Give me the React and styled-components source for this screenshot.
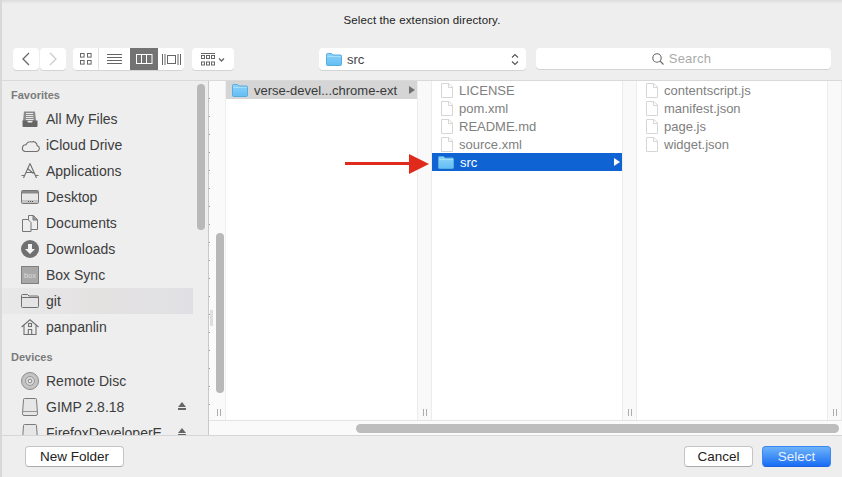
import React from "react";
import styled, { createGlobalStyle } from "styled-components";

const Global = createGlobalStyle`
  html, body { margin: 0; padding: 0; background: #ededed; }
  body { font-family: "Liberation Sans", Arial, sans-serif; -webkit-font-smoothing: antialiased; }
`;

const Dialog = styled.div`
  position: relative; width: 842px; height: 477px; overflow: hidden;
  display: flex; flex-direction: column; background: #eeeeee;
  border-left: 2px solid #d8d8d8; box-sizing: border-box;
`;
const Header = styled.header`
  height: 81px; flex: none; box-sizing: border-box; display: flex; flex-direction: column;
  border-bottom: 1px solid #d9d9d9; margin-left: -2px; padding-left: 2px;
  background: linear-gradient(#dcdcdc 0, #eeeeee 4px);
`;
const Title = styled.div`
  height: 48px; flex: none; box-sizing: border-box; padding-top: 13px; text-align: center;
  font-size: 11.5px; line-height: 14px; color: #222; letter-spacing: .12px;
`;
const Toolbar = styled.div`
  display: flex; align-items: flex-start; padding-left: 11px; height: 22px;
`;
const Tool = styled.div`
  height: 22px; box-sizing: border-box; background: #fff; border-radius: 4px;
  box-shadow: 0 1px 0 #d4d4d4; display: flex; align-items: center; justify-content: center; flex: none;
  width: ${p => p.$w}px; margin-left: ${p => p.$ml || 0}px; color: #666;
`;
const Segments = styled.div`
  display: flex; height: 22px; flex: none; margin-left: ${p => p.$ml}px; border-radius: 4px;
  overflow: hidden; box-shadow: 0 1px 0 #d4d4d4; background: #fff;
`;
const Segment = styled.div`
  width: ${p => p.$w}px; height: 22px; display: flex; align-items: center; justify-content: center;
  box-sizing: border-box; background: ${p => p.$on ? "#737373" : "#fff"}; color: ${p => p.$on ? "#fff" : "#666"};
  border-right: ${p => p.$div ? "1px solid #e2e2e2" : "0"};
`;
const PathPopup = styled(Tool)`
  justify-content: flex-start; padding: 0 7px 0 7px; gap: 5px; font-size: 13px; color: #444;
`;
const PathLabel = styled.span`flex: 1;`;
const SearchBox = styled(Tool)`
  gap: 5px; font-size: 13px; color: #aaa; height: 21px; padding-right: 4px; letter-spacing: .2px;
`;

const Body = styled.div`flex: 1; display: flex; min-height: 0;`;
const Sidebar = styled.aside`
  position: relative; width: 207px; flex: none; box-sizing: border-box; overflow: hidden;
  border-right: 1px solid #c9c9c9; padding-top: 7px;
`;
const Group = styled.div`
  height: 15px; line-height: 15px; padding-left: 9px; font-size: 11px; font-weight: 700; color: #7b7b7b;
  margin-top: ${p => p.$mt || 0}px; margin-bottom: 3px;
`;
const Place = styled.div`
  height: 26px; width: 191px; flex: none; display: flex; align-items: center; box-sizing: border-box;
  padding-left: 18px; gap: 6px; font-size: 14px; color: #3c3c3c; white-space: nowrap; position: relative;
  background: ${p => p.$on ? "linear-gradient(90deg,#e9e9e9,#e4e1e1 50%,#e0e0e4)" : "transparent"};
`;
const PlaceIcon = styled.span`width: 20px; height: 20px; display: flex; align-items: center; justify-content: center; flex: none; color: #707070;`;
const Eject = styled.span`
  position: absolute; left: 176px; top: 8px; width: 0; height: 0;
  border-left: 4px solid transparent; border-right: 4px solid transparent; border-bottom: 5px solid #666;
  &::after { content: ""; position: absolute; left: -4px; top: 6px; width: 8px; height: 2px; background: #666; }
`;
const Thumb = styled.div`
  position: absolute; background: #b8b8b8; border-radius: 4px;
`;
const SideThumb = styled(Thumb)`left: 195px; top: 3px; width: 8px; height: 146px;`;

const Browser = styled.div`flex: 1; display: flex; flex-direction: column; min-width: 0; position: relative;`;
const Columns = styled.div`height: 339px; flex: none; display: flex; border-bottom: 1px solid #e3e3e3; background: #fff;`;
const Resizer = styled.div`
  width: ${p => p.$w}px; flex: none; box-sizing: border-box; background: #f9f9f9; position: relative;
  border-left: 1px solid #ececec; border-right: 1px solid #ececec;
  &::after {
    content: ""; position: absolute; bottom: 4px; left: ${p => p.$grip}px; width: 2px; height: 7px;
    border-left: 1px solid #adadad; border-right: 1px solid #adadad;
  }
`;
const Stub = styled.div`
  width: 17px; flex: none; position: relative; background: #fafafa; box-sizing: border-box;
  border-right: 1px solid #eee;
  background-image: repeating-linear-gradient(#fafafa 0 17px, #9a9a9a 17px 18px);
  background-size: 1px 100%; background-repeat: no-repeat;
  &::before { content: ""; position: absolute; left: 1px; top: 229px; width: 3px; height: 16px; background: #dedede; }
  &::after {
    content: ""; position: absolute; bottom: 4px; left: 8px; width: 2px; height: 7px;
    border-left: 1px solid #adadad; border-right: 1px solid #adadad;
  }
`;
const StubThumb = styled(Thumb)`left: 7px; top: 152px; width: 8px; height: 160px;`;
const Column = styled.div`width: ${p => p.$w}px; flex: none; overflow: hidden;`;
const Row = styled.div`
  height: 18px; display: flex; align-items: center; gap: 6px; box-sizing: border-box; position: relative;
  padding-left: ${p => p.$pl}px; font-size: 13px; white-space: nowrap;
  color: ${p => p.$sel ? "#fff" : p.$dark ? "#3a3a3a" : "#808080"};
  background: ${p => p.$sel ? "#1063d3" : p.$gray ? "#d5d5d5" : "transparent"};
`;
const Chevron = styled.span`
  position: absolute; right: 2px; top: 5px; width: 0; height: 0;
  border-top: 4px solid transparent; border-bottom: 4px solid transparent;
  border-left: 6px solid ${p => p.$c};
`;
const HTrack = styled.div`
  flex: 1; background: #fafafa; padding: 3px 3px 0 147px;
`;
const HThumb = styled.div`height: 9px; background: #bdbdbd; border-radius: 5px;`;

const Footer = styled.footer`
  height: 42px; flex: none; box-sizing: border-box; border-top: 1px solid #d6d6d6; margin-left: -2px;
  display: flex; align-items: flex-start; padding: 10px 11px 0 25px; gap: 9px; background: #eeeeee;
`;
const Button = styled.button`
  width: ${p => p.$w}px; height: 21px; padding: 0; box-sizing: border-box; font: 13.5px "Liberation Sans", Arial, sans-serif;
  border-radius: 4px; border: 1px solid ${p => p.$primary ? "#3b86f0" : "#c4c4c4"};
  border-bottom-color: ${p => p.$primary ? "#1d62e0" : "#ababab"};
  background: ${p => p.$primary ? "linear-gradient(#6cb3fa,#1a6df5)" : "#fff"};
  color: ${p => p.$primary ? "#e6f1ff" : "#222"};
  margin-right: ${p => p.$mr || 0}px;
`;
const Arrow = styled.svg`position: absolute; left: 343px; top: 154px;`;

const Back = ({ c }) => (
  <svg width="10" height="14" viewBox="0 0 10 14"><path d={c} fill="none" stroke="currentColor" strokeWidth="1.3" /></svg>
);
const IconView = () => (
  <svg width="12" height="12" viewBox="0 0 12 12" fill="none" stroke="currentColor"><rect x=".5" y=".5" width="3.6" height="3.6" /><rect x="7.5" y=".5" width="3.6" height="3.6" /><rect x=".5" y="7.5" width="3.6" height="3.6" /><rect x="7.5" y="7.5" width="3.6" height="3.6" /></svg>
);
const ListView = () => (
  <svg width="15" height="11" viewBox="0 0 15 11" stroke="currentColor"><path d="M0 .5h15M0 3.5h15M0 6.5h15M0 9.5h15" /></svg>
);
const ColView = () => (
  <svg width="17" height="10" viewBox="0 0 17 10" fill="none" stroke="currentColor"><rect x=".5" y=".5" width="15.5" height="9" /><path d="M5.5 0v10M10.5 0v10" /></svg>
);
const FlowView = () => (
  <svg width="19" height="11" viewBox="0 0 19 11" fill="none" stroke="currentColor"><rect x="5.5" y="1.5" width="8" height="8" /><path d="M.5 0v11M3 0v11M16 0v11M18.500 0v11" /></svg>
);
const ArrangeIcon = () => (
  <svg width="24" height="13" viewBox="0 0 24 13" fill="none" stroke="currentColor">
    <path d="M0 .5h14" />
    <rect x=".5" y="2.500" width="3" height="3" /><rect x="5.500" y="2.500" width="3" height="3" /><rect x="10.500" y="2.500" width="3" height="3" />
    <rect x=".5" y="9" width="3" height="3" /><rect x="5.500" y="9" width="3" height="3" /><rect x="10.500" y="9" width="3" height="3" />
    <path d="M18 5.500l2.500 2.500 2.500-2.500" strokeWidth="1.300" />
  </svg>
);
const Updown = () => (
  <svg width="8" height="13" viewBox="0 0 8 13" fill="none" stroke="#555" strokeWidth="1.100"><path d="M1 4.500L4 1.500 7 4.500M1 8.500L4 11.500 7 8.500" /></svg>
);
const SearchGlass = () => (
  <svg width="12" height="12" viewBox="0 0 12 12" fill="none" stroke="#666" strokeWidth="1.100"><circle cx="5" cy="5" r="4.200" /><path d="M8 8l3.500 3.500" /></svg>
);
const Folder = ({ w = 16, h = 13 }) => (
  <svg width={w} height={h} viewBox="0 0 16 13" style={{ flex: "none" }}>
    <defs><linearGradient id="fg" x1="0" y1="0" x2="0" y2="1"><stop offset="0" stopColor="#8dd3fa" /><stop offset="1" stopColor="#63bdf3" /></linearGradient></defs>
    <path d="M.5 1.500Q.5.500 1.500.500H5.500L7 2H14.500Q15.500 2 15.500 3V11.500Q15.500 12.500 14.500 12.500H1.500Q.5 12.500 .5 11.500Z" fill="url(#fg)" stroke="#58addf" />
    <path d="M1 3.500H15" stroke="#a5dffc" />
  </svg>
);
const FileIcon = () => (
  <svg width="12" height="15" viewBox="0 0 12 15" fill="#fff" stroke="#d6d6d6" style={{ flex: "none" }}>
    <path d="M.5.500H8L11.500 4V14.500H.5Z" /><path d="M7.500.500V4.500H11.500" fill="none" />
  </svg>
);

const stroke = { fill: "none", stroke: "currentColor", strokeWidth: 1.1 };
const sideIcons = {
  files: <svg width="16" height="16" viewBox="0 0 16 16"><path d="M2 0.500h11l1 9.500H1z" fill="#8a8a8a" /><path d="M4 2.500h7M4 4.500h7.300M3.800 6.500h7.600M3.800 8.500h7.800" stroke="#e8e8e8" /><path d="M.5 9.500h4.500l1 2h4l1-2h4.500V15a1 1 0 0 1-1 1h-13a1 1 0 0 1-1-1z" fill="#666" /></svg>,
  cloud: <svg width="19" height="13" viewBox="0 0 19 13" {...stroke}><path d="M4 12.500h11.500a3 3 0 0 0 .6-5.900A4 4 0 0 0 10.500 3 4.500 4.500 0 0 0 5 5.800 3.400 3.400 0 0 0 4 12.500z" /></svg>,
  apps: <svg width="18" height="16" viewBox="0 0 18 16" {...stroke}><path d="M9 .5L2.500 15M9 .5L15.500 15M4.500 9.500h9M.5 12.500h3M14.500 12.500h3" /><path d="M6.500 5.500l6 5" /></svg>,
  desktop: <svg width="18" height="14" viewBox="0 0 18 14"><rect x=".5" y=".5" width="17" height="13" rx="1" fill="#e8e8e8" stroke="#777" /><path d="M1 1h16v2.500H1z" fill="#8a8a8a" /><rect x="1" y="10" width="16" height="3" fill="#c4c4c4" /><path d="M7 11.500h1M9 11.500h1M11 11.500h1" stroke="#555" /></svg>,
  docs: <svg width="16" height="17" viewBox="0 0 16 17"><path d="M6.500.5h5l4 4v10h-9z" fill="#eee" stroke="#777" /><path d="M.5 4.500h5.500l3 3v9h-8.500z" fill="#eee" stroke="#777" /><path d="M11 .5v4.500h4.500" fill="#999" stroke="#777" /></svg>,
  down: <svg width="18" height="18" viewBox="0 0 18 18"><circle cx="9" cy="9" r="9" fill="#707070" /><path d="M7 4h4v5h3l-5 5-5-5h3z" fill="#f3f3f3" /></svg>,
  box: <svg width="18" height="18" viewBox="0 0 18 18"><rect x=".5" y=".5" width="17" height="17" fill="#a8a8a8" stroke="#808080" /><text x="9" y="12" textAnchor="middle" fontSize="7.500" fontFamily="Liberation Sans" fill="#dddddd">box</text></svg>,
  folder: <svg width="18" height="14" viewBox="0 0 18 14"><path d="M.5 1.500q0-1 1-1h5l1.500 1.500h8.500q1 0 1 1v9.500q0 1-1 1h-15q-1 0-1-1z" fill="#e4e4e4" stroke="#707070" /><path d="M1 3.500h16" stroke="#707070" /></svg>,
  home: <svg width="18" height="16" viewBox="0 0 18 16" {...stroke}><path d="M.5 8L9 .8 17.500 8M3 6.500V15.500h12V6.500" /><path d="M7.300 15.500v-5h3.400v5" /><rect x="7.500" y="4.500" width="3" height="3" /></svg>,
  disc: <svg width="18" height="18" viewBox="0 0 18 18"><circle cx="9" cy="9" r="8.500" fill="#c4c4c4" stroke="#8c8c8c" /><circle cx="9" cy="9" r="4.500" fill="#d8d8d8" stroke="#999" /><circle cx="9" cy="9" r="1.800" fill="#eee" stroke="#888" /></svg>,
  drive: <svg width="16" height="18" viewBox="0 0 16 18"><path d="M2.500.5h11q1 0 1 1.200l1 14q0 1.800-1.500 1.800H2q-1.500 0-1.500-1.800l1-14q0-1.200 1-1.200z" fill="#e6e6e6" stroke="#7a7a7a" /><path d="M1 13.500h14" stroke="#999" /></svg>,
};

const places = [
  ["files", "All My Files"], ["cloud", "iCloud Drive"], ["apps", "Applications"], ["desktop", "Desktop"],
  ["docs", "Documents"], ["down", "Downloads"], ["box", "Box Sync"], ["folder", "git", true], ["home", "panpanlin"],
];
const devices = [["disc", "Remote Disc"], ["drive", "GIMP 2.8.18", false, true], ["drive", "FirefoxDeveloperE", false, true]];

const PlaceRow = ({ icon, label, on, eject }) => (
  <Place $on={on}>
    <PlaceIcon>{sideIcons[icon]}</PlaceIcon>
    {label}
    {eject && <Eject />}
  </Place>
);

export default function App() {
  return (
    <Dialog>
      <Global />
      <Header>
        <Title>Select the extension directory.</Title>
        <Toolbar>
          <Tool $w={26}><Back c="M8 1L2 7l6 6" /></Tool>
          <Tool $w={26} $ml={1} style={{ color: "#ccc" }}><Back c="M2 1l6 6-6 6" /></Tool>
          <Segments $ml={7}>
            <Segment $w={26} $div><IconView /></Segment>
            <Segment $w={31}><ListView /></Segment>
            <Segment $w={28} $on><ColView /></Segment>
            <Segment $w={26}><FlowView /></Segment>
          </Segments>
          <Tool $w={42} $ml={8}><ArrangeIcon /></Tool>
          <PathPopup $w={207} $ml={85}>
            <Folder />
            <PathLabel>src</PathLabel>
            <Updown />
          </PathPopup>
          <SearchBox $w={295} $ml={10}><SearchGlass />Search</SearchBox>
        </Toolbar>
      </Header>
      <Body>
        <Sidebar>
          <Group>Favorites</Group>
          {places.map(([i, l, on]) => <PlaceRow key={l} icon={i} label={l} on={on} />)}
          <Group $mt={10}>Devices</Group>
          {devices.map(([i, l, on, e]) => <PlaceRow key={l} icon={i} label={l} on={on} eject={e} />)}
          <SideThumb />
        </Sidebar>
        <Browser>
          <Columns>
            <Stub><StubThumb /></Stub>
            <Column $w={191}>
              <Row $pl={6} $gray $dark><Folder />verse-devel...chrome-ext<Chevron $c="#707070" /></Row>
            </Column>
            <Resizer $w={15} $grip={5} />
            <Column $w={190}>
              {["LICENSE", "pom.xml", "README.md", "source.xml"].map(n => (
                <Row key={n} $pl={9}><FileIcon />{n}</Row>
              ))}
              <Row $pl={6} $sel><Folder />src<Chevron $c="#fff" /></Row>
            </Column>
            <Resizer $w={15} $grip={5} />
            <Column $w={190}>
              {["contentscript.js", "manifest.json", "page.js", "widget.json"].map(n => (
                <Row key={n} $pl={9}><FileIcon />{n}</Row>
              ))}
            </Column>
            <Resizer $w={15} $grip={5} />
          </Columns>
          <HTrack><HThumb /></HTrack>
        </Browser>
      </Body>
      <Footer>
        <Button $w={99} $mr={551}>New Folder</Button>
        <Button $w={69}>Cancel</Button>
        <Button $w={69} $primary>Select</Button>
      </Footer>
      <Arrow width="88" height="20" viewBox="0 0 88 20"><path d="M0 8h64V0l20 10-20 10v-9H0z" fill="#e02a1b" /></Arrow>
    </Dialog>
  );
}
